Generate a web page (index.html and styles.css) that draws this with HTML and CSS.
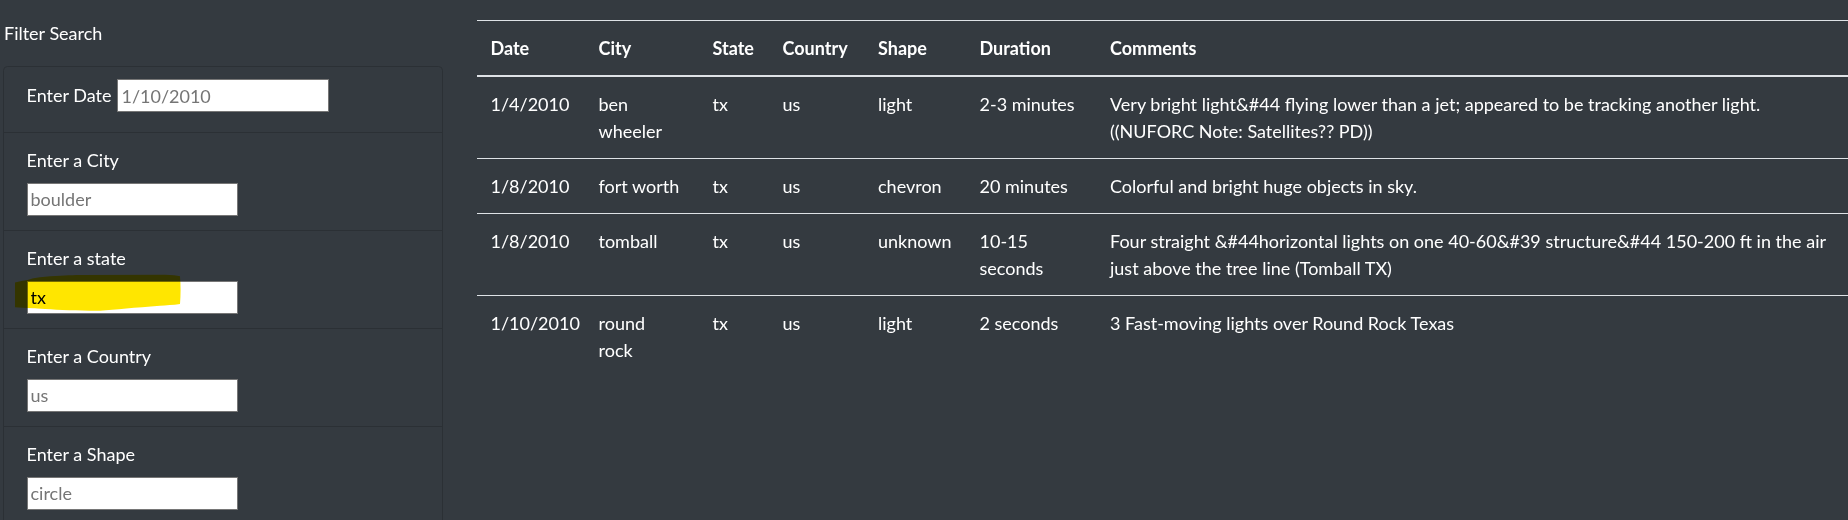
FILE: index.html
```html
<!DOCTYPE html>
<html lang="en">
<head>
<meta charset="utf-8">
<title>UFO Sightings</title>
<link rel="stylesheet" href="styles.css">
</head>
<body>
<div class="page">
  <aside class="filters">
    <div class="filters-title">Filter Search</div>
    <ul class="filter-list">
      <li class="filter-item filter-item-inline">
        <label for="datetime">Enter Date</label>
        <input id="datetime" class="filter-input" type="text" placeholder="1/10/2010">
      </li>
      <li class="filter-item">
        <label for="city">Enter a City</label>
        <input id="city" class="filter-input" type="text" placeholder="boulder">
      </li>
      <li class="filter-item filter-item-marked">
        <label for="state">Enter a state</label>
        <input id="state" class="filter-input" type="text" value="tx">
        <svg class="marker" width="166" height="37" viewBox="0 0 166 37" aria-hidden="true">
          <path d="M0 7.5 C4 6.5 9 5.5 12.5 5 C15 4.2 17 3.6 18.5 3.3 C23 2.4 27 1.9 30 1.7 C45 0.6 55 0.2 65 0 L150 -0.3 C157 -0.2 162 0.2 165 1.3 C165.8 10 165.8 20 165 29 C158 30 151 30.4 145 30.8 C120 32.5 100 35 85 35.7 C65 35.8 45 35 30 34 C24 33.6 20 33.4 18 33.3 C10 33 4 32.6 0 32.3 Z" fill="#ffe600"/>
        </svg>
      </li>
      <li class="filter-item">
        <label for="country">Enter a Country</label>
        <input id="country" class="filter-input" type="text" placeholder="us">
      </li>
      <li class="filter-item">
        <label for="shape">Enter a Shape</label>
        <input id="shape" class="filter-input" type="text" placeholder="circle">
      </li>
    </ul>
  </aside>
  <main class="results">
    <table class="sightings">
      <thead>
        <tr>
          <th class="col-date">Date</th>
          <th class="col-city">City</th>
          <th class="col-state">State</th>
          <th class="col-country">Country</th>
          <th class="col-shape">Shape</th>
          <th class="col-duration">Duration</th>
          <th class="col-comments">Comments</th>
        </tr>
      </thead>
      <tbody>
        <tr>
          <td>1/4/2010</td>
          <td class="cell-city">ben wheeler</td>
          <td>tx</td>
          <td>us</td>
          <td>light</td>
          <td>2-3 minutes</td>
          <td>Very bright light&amp;#44 flying lower than a jet; appeared to be tracking another light. ((NUFORC Note: Satellites?? PD))</td>
        </tr>
        <tr>
          <td>1/8/2010</td>
          <td class="cell-city">fort worth</td>
          <td>tx</td>
          <td>us</td>
          <td>chevron</td>
          <td>20 minutes</td>
          <td>Colorful and bright huge objects in sky.</td>
        </tr>
        <tr>
          <td>1/8/2010</td>
          <td class="cell-city">tomball</td>
          <td>tx</td>
          <td>us</td>
          <td>unknown</td>
          <td>10-15 seconds</td>
          <td>Four straight &amp;#44horizontal lights on one 40-60&amp;#39 structure&amp;#44 150-200 ft in the air just above the tree line (Tomball TX)</td>
        </tr>
        <tr>
          <td>1/10/2010</td>
          <td class="cell-city">round rock</td>
          <td>tx</td>
          <td>us</td>
          <td>light</td>
          <td>2 seconds</td>
          <td>3 Fast-moving lights over Round Rock Texas</td>
        </tr>
      </tbody>
    </table>
  </main>
</div>
</body>
</html>
```
FILE: styles.css
```css
* {
  box-sizing: border-box;
}

html, body {
  margin: 0;
  padding: 0;
  background: #343a40;
  color: #ffffff;
  font-family: Lato, "Liberation Sans", Arial, sans-serif;
  font-size: 18px;
  line-height: 27px;
  overflow: hidden;
}

.page {
  display: flex;
  align-items: flex-start;
  padding-top: 20px;
  width: 1848px;
}

.filters {
  width: 443px;
  flex: 0 0 443px;
  padding-left: 3px;
}

.filters-title {
  padding-left: 1px;
  margin-bottom: 19px;
}

.filter-list {
  list-style: none;
  margin: 0;
  padding: 0;
  border: 1px solid #2b3035;
  border-radius: 4.5px;
}

.filter-item {
  position: relative;
  padding: 13.5px 22.5px 14.6px;
  border-top: 1px solid #2b3035;
}

.filter-item:first-child {
  border-top: 0;
}

.filter-item label {
  display: block;
  margin-bottom: 9px;
}

.filter-item-inline {
  display: flex;
  align-items: center;
  padding-top: 12px;
  padding-bottom: 20px;
}

.filter-item-inline label {
  margin: 0 6px 0 0;
}

.filter-input {
  display: block;
  width: 211.5px;
  height: 33px;
  margin: 0;
  padding: 0 3px;
  border: 1px solid #767676;
  border-radius: 0;
  background: #ffffff;
  color: #000000;
  font-family: inherit;
  font-size: 18px;
  outline: none;
}

.filter-input::placeholder {
  color: #757575;
  opacity: 1;
}

.marker {
  position: absolute;
  left: 11px;
  top: 44px;
  mix-blend-mode: multiply;
  pointer-events: none;
  overflow: visible;
}

.results {
  flex: 1 1 auto;
  min-width: 0;
  margin-left: 34px;
}

.sightings {
  width: 100%;
  border-collapse: collapse;
  table-layout: fixed;
}

.sightings th,
.sightings td {
  padding: 13.5px;
  vertical-align: top;
  text-align: left;
  border-top: 1px solid #dee2e6;
}

.sightings thead th {
  vertical-align: bottom;
  border-bottom: 2px solid #dee2e6;
  font-weight: 700;
}

.sightings td.cell-city {
  padding-right: 18px;
}

.col-date { width: 108px; }
.col-city { width: 114px; }
.col-state { width: 70px; }
.col-country { width: 95.5px; }
.col-shape { width: 101.5px; }
.col-duration { width: 130.5px; }
.col-comments { width: auto; }
```
